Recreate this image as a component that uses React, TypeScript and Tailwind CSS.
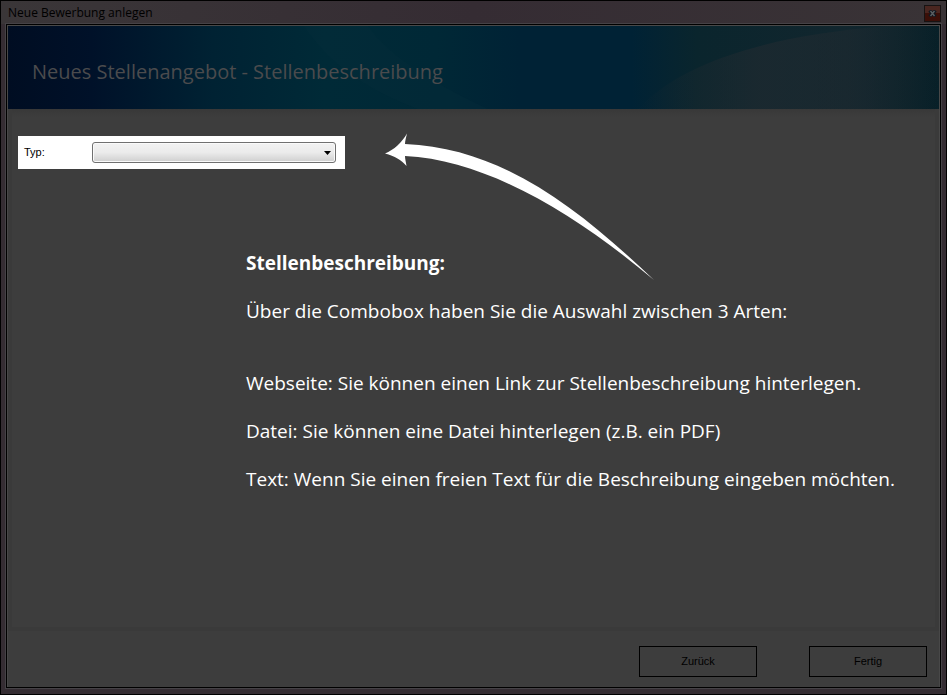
function CloseIcon() {
  return (
    <svg width="9" height="7" viewBox="0 0 9 7" aria-hidden="true">
      <path d="M1.5 0.5 7.5 6.5M7.5 0.5 1.5 6.5" stroke="#111820" strokeWidth="3.4" />
      <path d="M2.5 1 6.5 6M6.5 1 2.5 6" stroke="#5b5f62" strokeWidth="1.4" />
    </svg>
  );
}

function TitleBar() {
  return (
    <header className="flex h-[23px] items-center justify-between bg-linear-to-r from-[#3a3638] via-[#352c33] to-[#393336] pt-px pr-[5px] pl-[7px]">
      <span className="text-[12px] leading-4 text-black">Neue Bewerbung anlegen</span>
      <button
        type="button"
        aria-label="Schließen"
        className="flex h-[17px] w-[17px] items-center justify-center border border-[#171313] bg-linear-to-b from-[#4a2620] from-45% to-[#3b0f08] to-50%"
      >
        <CloseIcon />
      </button>
    </header>
  );
}

function Banner() {
  return (
    <div className="relative flex h-[83px] items-center overflow-hidden bg-[linear-gradient(90deg,#000d22_0%,#001129_9%,#002233_22%,#002a37_34%,#002836_46%,#002235_55%,#002235_67%,#0a252d_74%,#12262e_90%,#082028_100%)] pt-2 pl-6">
      <svg
        className="absolute inset-0 h-full w-full"
        viewBox="0 0 931 83"
        preserveAspectRatio="none"
        aria-hidden="true"
      >
        <defs>
          <linearGradient id="swoosh" x1="0" x2="1" y1="0" y2="0">
            <stop offset="0" stopColor="#222b31" stopOpacity="0" />
            <stop offset="0.4" stopColor="#222b31" stopOpacity="0.6" />
            <stop offset="0.75" stopColor="#222b31" stopOpacity="0.4" />
            <stop offset="1" stopColor="#222b31" stopOpacity="0" />
          </linearGradient>
        </defs>
        <path d="M630 83C670 40 750 10 880 0H931V83Z" fill="url(#swoosh)" />
        <path d="M296 0C320 35 350 60 410 83H480C430 60 380 30 360 0Z" fill="#052e3c" opacity="0.3" />
      </svg>
      <h1 className="relative text-[20px] leading-8 text-[#4b4b4d]">
        Neues Stellenangebot - Stellenbeschreibung
      </h1>
    </div>
  );
}

function TypeField() {
  return (
    <div className="flex h-[33px] w-[327px] items-center bg-white pl-[6px]">
      <label htmlFor="typ" className="w-[68px] font-['Liberation_Sans',sans-serif] text-[11px] text-black">
        Typ:
      </label>
      <div className="relative">
        <select
          id="typ"
          className="block h-[21px] w-[244px] appearance-none rounded-[3px] border border-[#707070] bg-linear-to-b from-[#f2f2f2] via-[#ebebeb] via-50% to-[#cfcfcf] px-2 text-[11px] shadow-[inset_0_0_0_1px_#fafafa]"
        >
          <option value="" />
          <option>Webseite</option>
          <option>Datei</option>
          <option>Text</option>
        </select>
        <svg
          className="pointer-events-none absolute top-[9px] right-[5px]"
          width="7"
          height="4"
          viewBox="0 0 7 4"
          aria-hidden="true"
        >
          <path d="M0 0H7L3.500 4Z" fill="#000" />
        </svg>
      </div>
    </div>
  );
}

function Arrow() {
  return (
    <svg
      className="pointer-events-none absolute top-[24px] left-[373px]"
      width="270"
      height="148"
      viewBox="385 133 270 148"
      aria-hidden="true"
    >
      <path
        d="M385 153.500C394 150 402 142 407 133.500C406 138 405 141 405 144C500 148 575 205 654 280C580 218 490 160 405 156C405 159 406 162 406.500 166C401 160 395 156 385 153.500Z"
        fill="#fff"
      />
    </svg>
  );
}

function Help() {
  return (
    <section className="mt-[82px] ml-[228px] flex flex-col gap-6 text-[19px] leading-6 text-white">
      <h2 className="font-bold">Stellenbeschreibung:</h2>
      <p>Über die Combobox haben Sie die Auswahl zwischen 3 Arten:</p>
      <p className="pt-6">Webseite: Sie können einen Link zur Stellenbeschreibung hinterlegen.</p>
      <p>Datei: Sie können eine Datei hinterlegen (z.B. ein PDF)</p>
      <p>Text: Wenn Sie einen freien Text für die Beschreibung eingeben möchten.</p>
    </section>
  );
}

function FooterButton({ children }: { children: string }) {
  return (
    <button
      type="button"
      className="h-[31px] w-[118px] border border-black font-['Liberation_Sans',sans-serif] text-[11px] text-black"
    >
      {children}
    </button>
  );
}

export default function App() {
  return (
    <div className="flex min-h-screen flex-col border border-black bg-[#352d33] font-['Open_Sans','Noto_Sans',sans-serif]">
      <TitleBar />
      <main className="mx-[5px] mb-[6px] flex grow flex-col border border-black bg-[#3d3d3d] outline outline-[#454246]">
        <div className="flex grow flex-col border-x border-t border-[#484848]">
          <Banner />
          <div className="relative flex grow flex-col border-x-4 border-b-4 border-[#3a3a3a] bg-linear-to-b from-[#383838] to-[#3d3d3d] to-[8px] px-[6px] pt-[27px]">
            <TypeField />
            <Arrow />
            <Help />
          </div>
          <footer className="flex justify-end gap-[52px] px-3 pt-[15px] pb-[10px]">
            <FooterButton>Zurück</FooterButton>
            <FooterButton>Fertig</FooterButton>
          </footer>
        </div>
      </main>
    </div>
  );
}
